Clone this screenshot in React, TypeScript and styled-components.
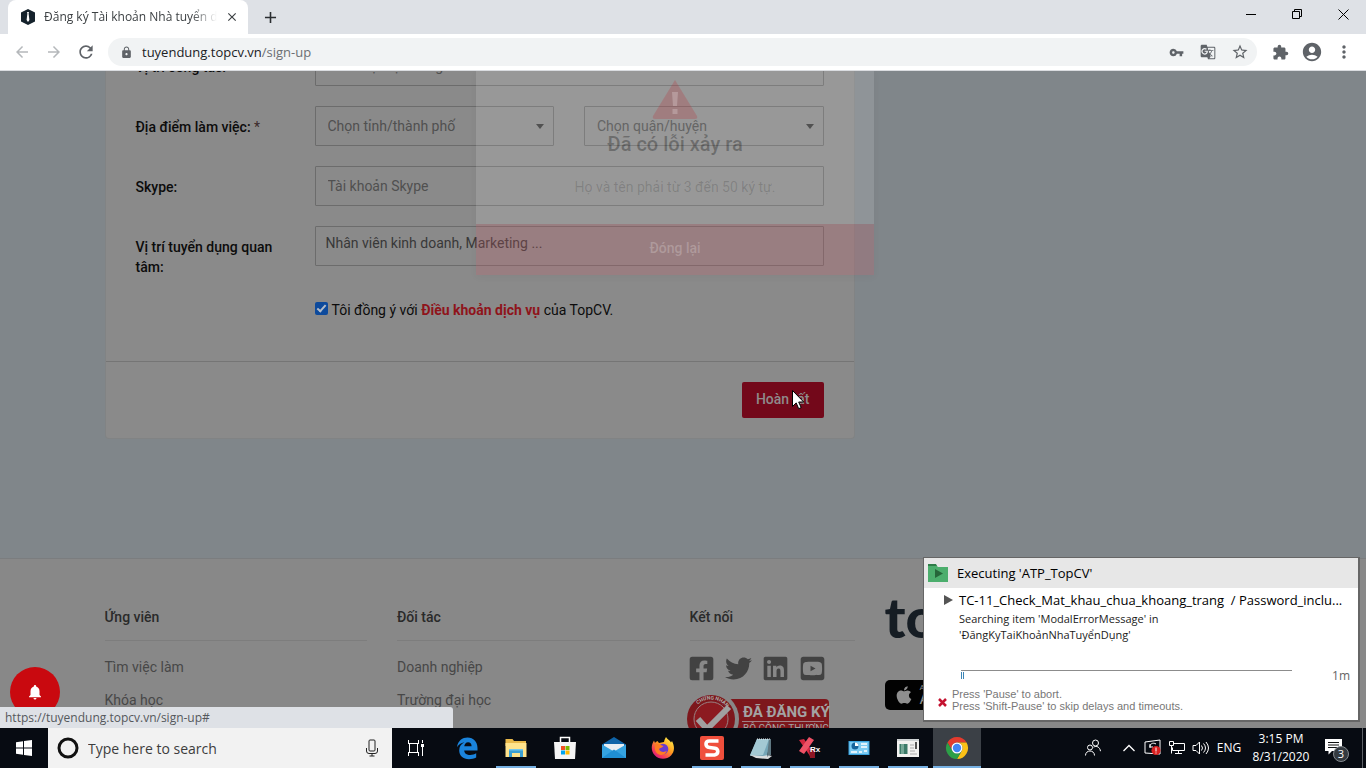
import React from 'react';
import styled, { createGlobalStyle, css } from 'styled-components';
import {
  MdArrowBack, MdArrowForward, MdRefresh, MdLock, MdVpnKey, MdGTranslate, MdStarBorder,
  MdExtension, MdAccountCircle, MdMoreVert, MdClose, MdAdd, MdNotifications,
} from 'react-icons/md';
import { FaFacebookSquare, FaTwitter, FaLinkedin, FaYoutubeSquare, FaApple } from 'react-icons/fa';

const ui = `'Open Sans', 'Noto Sans', sans-serif`;
const web = `Roboto, 'Noto Sans', sans-serif`;

const Global = createGlobalStyle`
  *, *::before, *::after { box-sizing: border-box; }
  body { margin: 0; font-family: ${web}; font-size: 14px; line-height: 20px; overflow: hidden; }
  button, input, select { font: inherit; margin: 0; }
  button { border: 0; background: none; padding: 0; }
  a { color: inherit; text-decoration: none; }
  h2, h3, p, ul { margin: 0; padding: 0; font-size: inherit; }
  ul { list-style: none; }
  svg { display: block; }
`;

const Desktop = styled.div`
  display: flex;
  flex-direction: column;
  height: 100vh;
`;

/* Browser frame */
const TabStrip = styled.header`
  display: flex;
  align-items: stretch;
  height: 34px;
  flex: none;
  padding-left: 8px;
  background: #dee1e6;
  font-family: ${ui};
`;
const Tab = styled.div`
  display: flex;
  align-items: center;
  gap: 8px;
  width: 240px;
  padding: 0 9px 0 12px;
  border-radius: 8px 8px 0 0;
  background: #fff;
  color: #3c4043;
`;
const TabTitle = styled.span`
  flex: 1;
  overflow: hidden;
  white-space: nowrap;
  font-size: 12px;
  mask-image: linear-gradient(90deg, #000 85%, transparent);
`;
const IconButton = styled.button<{ $w?: number; $tone?: string }>`
  display: flex;
  align-items: center;
  justify-content: center;
  flex: none;
  width: ${p => p.$w ?? 32}px;
  color: ${p => p.$tone ?? '#5f6368'};
`;
const WindowControls = styled.div`
  display: flex;
  margin-left: auto;
  padding-bottom: 6px;
`;
const Toolbar = styled.nav`
  display: flex;
  align-items: center;
  flex: none;
  height: 37px;
  padding: 0 6px;
  border-bottom: 1px solid #dadce0;
  background: #fff;
`;
const AddressBar = styled.label`
  display: flex;
  align-items: center;
  flex: 1;
  height: 28px;
  margin: 0 7px 0 6px;
  padding: 0 1px 0 12px;
  border-radius: 14px;
  background: #f1f3f4;
  font: 13px/20px ${ui};
  color: #6b6f73;
`;
const Url = styled.span`
  flex: 1;
  margin-left: 9px;
  b { font-weight: 400; color: #202124; }
`;

/* Web page */
const Viewport = styled.main`
  position: relative;
  flex: 1;
  min-height: 0;
  overflow: hidden;
  background: #80868a;
`;
const Scrolled = styled.div`
  margin-top: -25px;
`;
const Container = styled.div`
  display: flex;
  max-width: 1170px;
  margin: 0 auto;
`;
const Gutter = styled.div`
  padding-right: 17px;
`;
const Column = styled.div<{ $span: number }>`
  flex: 0 0 calc(100% * ${p => p.$span} / 12);
  min-width: 0;
  padding: 0 15px;
`;
const Card = styled.form`
  border: 1px solid #818384;
  border-top: 0;
  border-radius: 0 0 4px 4px;
  background: #8a8a8a;
`;
const Fields = styled.div`
  display: grid;
  row-gap: 20px;
  padding: 0 30px 38px;
`;
const FieldRow = styled.div`
  display: grid;
  grid-template-columns: 179px 1fr;
  align-items: start;
`;
const Label = styled.label`
  padding: 11px 30px 0 0;
  font-weight: 500;
  color: #0c0c0c;
  span { font-weight: 400; color: #3c2a2b; }
`;
const box = css`
  width: 100%;
  height: 40px;
  border: 1px solid #6c6c6c;
  border-radius: 1px;
  background: transparent;
  color: #505050;
`;
const TextInput = styled.input<{ $tags?: boolean }>`
  ${box}
  padding: ${p => (p.$tags ? '0 10px 6px' : '0 12px')};
  &::placeholder { color: ${p => (p.$tags ? '#383838' : '#505050')}; opacity: 1; }
`;
const SelectPair = styled.div`
  display: grid;
  grid-template-columns: 1fr 1fr;
  gap: 30px;
`;
const SelectBox = styled.div`
  position: relative;
  &::after {
    content: '';
    position: absolute;
    right: 10px;
    top: 18px;
    border: 4px solid transparent;
    border-top: 5px solid #3a3a3a;
    border-bottom: 0;
  }
`;
const Select = styled.select`
  ${box}
  padding: 0 12px;
  appearance: none;
`;
const Consent = styled.label`
  display: flex;
  align-items: center;
  gap: 4px;
  padding: 3px 0;
  grid-column: 2;
  color: #0c0c0c;
  a { font-weight: 700; color: #8f141b; }
`;
const Check = styled.input`
  appearance: none;
  width: 13px;
  height: 13px;
  border-radius: 2px;
  margin-bottom: 3px;
  background: #0d4a9c;
  position: relative;
  &:checked::after {
    content: '';
    position: absolute;
    left: 4px;
    top: 1px;
    width: 5px;
    height: 9px;
    border: solid #b4bdc9;
    border-width: 0 2px 2px 0;
    transform: rotate(42deg);
  }
`;
const CardFooter = styled.div`
  display: flex;
  justify-content: flex-end;
  padding: 20px 30px;
  border-top: 1px solid #757575;
`;
const Submit = styled.button`
  height: 36px;
  padding: 0 14px 2px;
  border-radius: 2px;
  background: #73081a;
  color: #8f8a8b;
  font-weight: 500;
`;
const SiteFooter = styled.footer`
  margin-top: 119px;
  padding-top: 48px;
  border-top: 1px solid #7b7d7f;
  background: #888;
  height: 260px;
`;
const FooterHead = styled.h3`
  padding-bottom: 13px;
  margin-bottom: 16px;
  border-bottom: 1px solid #7d7d7d;
  font-weight: 500;
  color: #2a2a2a;
`;
const Links = styled.ul`
  display: grid;
  gap: 13px;
  color: #474747;
`;
const Social = styled.div`
  display: flex;
  gap: 8px;
  margin: -2px 0 12px -2px;
  color: #424242;
  a { width: 29px; }
`;
const SealWrap = styled.div`
  margin: 0 -4px;
`;
const Wordmark = styled.div`
  height: 83px;
  margin-top: -10px;
  font: 900 56px/40px Lato, sans-serif;
  color: #161d24;
`;
const StoreBadge = styled.a`
  display: flex;
  align-items: center;
  gap: 6px;
  width: 110px;
  height: 30px;
  padding-left: 9px;
  border-radius: 5px;
  background: #020202;
  color: #8f8f8f;
  font-size: 16px;
  line-height: 14px;
  small { display: block; font-size: 8px; line-height: 8px; }
`;
const BellButton = styled.button`
  position: absolute;
  left: 10px;
  bottom: 11px;
  display: grid;
  place-items: center;
  width: 50px;
  height: 50px;
  border-radius: 50%;
  background: #c9090f;
  color: #fff;
`;
const StatusBubble = styled.div`
  position: absolute;
  left: 0;
  bottom: 0;
  width: 453px;
  height: 21px;
  padding-left: 5px;
  border-radius: 0 3px 0 0;
  background: #dee1e6;
  color: #55585c;
  font: 12px/21px ${ui};
`;

/* Fading error dialog */
const ModalLayer = styled.div`
  position: absolute;
  inset: 0 16px auto 0;
  display: flex;
  justify-content: center;
`;
const Modal = styled.section`
  width: 398px;
  height: 204px;
  padding-top: 8px;
  text-align: center;
  background: rgba(255, 255, 255, 0.12);
  box-shadow: 0 2px 8px rgba(0, 0, 0, 0.04);
  svg { margin: 0 auto; }
  h2 { margin-top: 10px; font-size: 20px; line-height: 28px; font-weight: 500; color: rgba(0, 0, 0, 0.29); }
  p { margin-top: 19px; line-height: 20px; color: rgba(0, 0, 0, 0.16); }
`;
const ModalClose = styled.button`
  width: 100%;
  height: 51px;
  margin-top: 27px;
  padding-bottom: 3px;
  background: rgba(160, 0, 20, 0.17);
  color: rgba(255, 255, 255, 0.22);
  font-weight: 500;
`;
const Cursor = styled.svg`
  position: absolute;
  left: 792px;
  top: 319px;
`;

/* Test runner notice */
const Notice = styled.aside`
  position: fixed;
  right: 6px;
  bottom: 46px;
  width: 437px;
  height: 165px;
  border: 2px solid #666;
  border-top-width: 1px;
  border-left-width: 1px;
  background: #fff;
  color: #1b1b1b;
  font: 12px/16px ${ui};
`;
const NoticeHead = styled.div`
  display: flex;
  align-items: center;
  gap: 9px;
  height: 30px;
  padding-left: 4px;
  background: #e7e7e7;
  color: #000;
  font-size: 13px;
`;
const NoticeBody = styled.div`
  padding: 3px 8px 0 20px;
`;
const TestName = styled.div`
  display: flex;
  align-items: center;
  gap: 5px;
  line-height: 18px;
  font-size: 13px;
  color: #000;
  white-space: nowrap;
`;
const StepText = styled.p`
  padding: 2px 0 0 15px;
  font-size: 11px;
`;
const Progress = styled.div`
  display: flex;
  gap: 40px;
  padding: 27px 0 0 17px;
  color: #666;
  line-height: 12px;
`;
const Track = styled.div`
  flex: 1;
  border-top: 1px solid #8c8c8c;
  &::before {
    content: '';
    display: block;
    width: 3px;
    height: 7px;
    margin-top: 1px;
    border: solid #3b84b5;
    border-width: 0 1px;
  }
`;
const Hints = styled.div`
  display: flex;
  align-items: center;
  gap: 5px;
  margin-left: -6px;
  padding-top: 6px;
  color: #777;
  font: 11px/12px 'Liberation Sans', sans-serif;
  svg { margin-top: 4px; }
`;

/* Taskbar */
const Taskbar = styled.footer`
  display: flex;
  flex: none;
  height: 40px;
  background: #070b12;
  font-family: ${ui};
  color: #fff;
`;
const Search = styled.label`
  display: flex;
  align-items: center;
  gap: 9px;
  width: 344px;
  padding: 0 14px 0 9px;
  background: #f2f2f2;
  input {
    flex: 1;
    min-width: 0;
    border: 0;
    padding: 1px 0 0;
    background: none;
    font-size: 14px;
  }
  input::placeholder { color: #3d3d3d; opacity: 1; }
`;
const Apps = styled.div`
  display: flex;
  gap: 1px;
  margin-left: 3px;
`;
const AppButton = styled.button<{ $open?: boolean; $active?: boolean }>`
  display: grid;
  place-items: center;
  position: relative;
  width: 48px;
  background: ${p => (p.$active ? '#3b4046' : 'transparent')};
  &::after {
    content: '';
    display: ${p => (p.$open ? 'block' : 'none')};
    position: absolute;
    bottom: 0;
    left: ${p => (p.$active ? 0 : 4)}px;
    right: ${p => (p.$active ? 0 : 4)}px;
    height: 2px;
    background: #76b0e2;
  }
`;
const Tray = styled.div`
  display: flex;
  align-items: center;
  margin-left: auto;
  font-size: 12px;
  line-height: 18px;
`;
const Clock = styled.time`
  width: 72px;
  text-align: center;
`;
const Notifications = styled.button`
  width: 45px;
  padding: 4px 0 0 8px;
  color: #fff;
`;
const PeekEdge = styled.div`
  width: 4px;
  height: 40px;
  border-left: 1px solid #5c6066;
`;

const Svg = ({ s = 24, vb = '0 0 24 24', children }: { s?: number; vb?: string; children: React.ReactNode }) => (
  <svg width={s} height={s} viewBox={vb} fill="none">{children}</svg>
);

const Edge = () => (
  <Svg><path d="M2 11.200C3 4.500 7.500 1.500 12.500 1.500 18.500 1.500 22.500 6 22.500 12v2.400H9.200c.2 3 2.600 4.500 6 4.500 2.200 0 4.300-.6 6-1.600v4.200c-2 1.200-4.600 1.700-7.200 1.700C8 23.200 4.200 19.600 4.200 14.500c0-3.700 1.900-6.600 5.200-8.200C6 6.800 3.400 8.700 2 11.200zM9.300 10.300h7.300c0-2.700-1.400-4-3.500-4-2.200 0-3.600 1.700-3.800 4z" fill="#1a84dc" /></Svg>
);
const Folder = () => (
  <Svg>
    <path d="M1.500 3h7l1.500 2h12v5H1.500z" fill="#e9b94a" />
    <path d="M1.500 7h21v14h-21z" fill="#ffe38c" />
    <path d="M5 13h14v8h-3v-4H8v4H5z" fill="#3ba0d3" />
    <path d="M5 13h14v1.500H5z" fill="#75c7ea" />
  </Svg>
);
const Store = () => (
  <Svg>
    <path d="M7.500 7V1.500h9V7" stroke="#fff" strokeWidth="1.500" />
    <path d="M1 6h22l-1 17H2z" fill="#f5f5f5" />
    <path d="M8 10h4v4H8z" fill="#f25022" /><path d="M12.500 10h4v4h-4z" fill="#7fba00" />
    <path d="M8 14.500h4v4H8z" fill="#00a4ef" /><path d="M12.500 14.500h4v4h-4z" fill="#ffb900" />
  </Svg>
);
const Mail = () => (
  <Svg>
    <path d="M0 8.500 12 1l12 7.500V22H0z" fill="#0f64a8" />
    <path d="M2 8h20v7H2z" fill="#e8eef2" />
    <path d="m0 8.500 12 7 12-7V22H0z" fill="#35a3e0" />
    <path d="m0 22 12-8.500L24 22z" fill="#1f8fd3" />
  </Svg>
);
const Firefox = () => (
  <Svg>
    <defs>
      <linearGradient id="ff" x1="20" y1="2" x2="5" y2="22" gradientUnits="userSpaceOnUse">
        <stop stopColor="#fff04a" /><stop offset=".45" stopColor="#ff9a1f" /><stop offset=".8" stopColor="#f5385c" /><stop offset="1" stopColor="#d51a80" />
      </linearGradient>
    </defs>
    <path d="M15 1c1 2.500 4 3 5 5.500l1-1.500c3 6 2.500 11-1 14.500-4.500 4.500-12 4.200-16 0C-.5 14.500.2 9 3 4.500L4 7c.8-1 1.500-1.500 2.500-2L8 7l5-1c.5-2 1-3.500 2-5z" fill="url(#ff)" />
    <circle cx="12" cy="13" r="5.300" fill="#6a3bd0" />
    <path d="M4.500 8.500c3-1.500 5 .5 8 1.500-1 2-3.500 1.500-4.500 3 1 3 5 4 8 1.500-1 4-5.500 5.500-9 3.500-3-1.800-3.800-6-2.500-9.500z" fill="#ff7d22" />
  </Svg>
);
const Snagit = () => (
  <Svg>
    <rect width="24" height="24" rx="2" fill="#ef4f3c" />
    <path d="M18.500 5H9.500Q6 5 6 8t3.500 3.500l5.500.8q2.800.5 2.800 3.300T14.500 19H5.500" stroke="#fff" strokeWidth="3.600" />
  </Svg>
);
const Notebook = () => (
  <Svg>
    <path d="M8 3h14l-4 17H1z" fill="#75a6b8" /><path d="M8 3h12l-6 16H1z" fill="#a3c9d4" />
    <path d="m1 19 13 1 5-1 4 1-4 3-12-1z" fill="#d9dcde" /><path d="M20 3h2v16h-2l-2 2z" fill="#5f7882" />
    <path d="M8 3h13" stroke="#eee" strokeDasharray="1 1" />
  </Svg>
);
const Ranorex = () => (
  <Svg>
    <path d="m1 4 5-1 11 16-5 1z" fill="#d32840" /><path d="m11 1 5 3L6 18l-5-3z" fill="#ee5266" />
    <path d="M11 14h6v8h-5z" fill="#8f1724" />
    <text x="12" y="16" fontFamily="Liberation Sans" fontSize="8" fontWeight="700" fill="#fff">Rx</text>
  </Svg>
);
const Panel = () => (
  <Svg>
    <path d="M1.500 5h21v14h-21z" fill="#39a3df" /><path d="M2.500 6h19v12h-19z" fill="#7dcbf2" />
    <circle cx="8" cy="10" r="3.500" fill="#16639b" /><path d="M8 10V6.500A3.500 3.500 0 0 1 11.500 10z" fill="#fff" />
    <path d="M14 8h6M14 11h6M4 16h6M12 16h3M17 15h3" stroke="#fff" strokeWidth="1.500" />
  </Svg>
);
const Report = () => (
  <Svg>
    <path d="M1 3h22v18H1z" fill="#f2f2f0" /><path d="M1 3h22v2H1z" fill="#cfd3d4" />
    <path d="M3.500 8h8v10h-8z" fill="#3c7a68" /><path d="M5 8h3v10H5z" fill="#75a796" />
    <path d="M14 9h4M14 12h4M14 15h5M14 18h7" stroke="#aaa" /><path d="M20 6v7" stroke="#222" strokeWidth="1.500" />
  </Svg>
);
const Chrome = () => (
  <Svg>
    <path d="M2.470 6.500A11 11 0 0 1 21.530 6.500H12A5.500 5.500 0 0 0 7.240 14.750z" fill="#e33b2e" />
    <path d="M21.530 6.500A11 11 0 0 1 12 23l4.760-8.250A5.500 5.500 0 0 0 12 6.500z" fill="#fbc116" />
    <path d="M12 23A11 11 0 0 1 2.470 6.500l4.770 8.250a5.500 5.500 0 0 0 9.520 0z" fill="#2c9f47" />
    <circle cx="12" cy="12" r="5.500" fill="#fff" /><circle cx="12" cy="12" r="4.200" fill="#4285f4" />
  </Svg>
);

const apps = [
  { name: 'Edge', icon: <Edge /> },
  { name: 'File Explorer', icon: <Folder />, open: true },
  { name: 'Store', icon: <Store /> },
  { name: 'Mail', icon: <Mail /> },
  { name: 'Firefox', icon: <Firefox /> },
  { name: 'Snagit', icon: <Snagit />, open: true },
  { name: 'Notepad', icon: <Notebook />, open: true },
  { name: 'Ranorex', icon: <Ranorex />, open: true },
  { name: 'Control Panel', icon: <Panel />, open: true },
  { name: 'Report', icon: <Report />, open: true },
  { name: 'Chrome', icon: <Chrome />, open: true, active: true },
];

const TradeBadge = () => (
  <SealWrap>
    <svg width="146" height="52" viewBox="0 0 146 52">
      <rect x="30" y="5" width="113" height="42" rx="4" fill="#7d171c" />
      <circle cx="25" cy="25" r="28" fill="#888" />
      <circle cx="25" cy="25" r="24" fill="#7d171c" />
      <circle cx="25" cy="25" r="17" fill="#8c1a20" stroke="#9a8283" />
      <path id="ring" d="M5.500 25a19.500 19.500 0 0 1 39 0" fill="none" />
      <text fontSize="5" fontWeight="700" fill="#aaa" fontFamily="Roboto"><textPath href="#ring" startOffset="16">CHỨNG NHẬN</textPath></text>
      <path d="m12 25 9 10 22-22" stroke="#a0a0a0" strokeWidth="6" fill="none" />
      <text x="57" y="23" fontSize="15" fontWeight="700" fill="#a3a3a3" fontFamily="Roboto">ĐÃ ĐĂNG KÝ</text>
      <path d="M56 27.500h82" stroke="#a08084" />
      <text x="57" y="38" fontSize="10" fill="#a3a3a3" fontFamily="Roboto">BỘ CÔNG THƯƠNG</text>
    </svg>
  </SealWrap>
);

export default function App() {
  return (
    <Desktop>
      <Global />
      <TabStrip>
        <Tab>
          <Svg s={16} vb="0 0 16 16">
            <path d="M8 0l7 3.500v9L8 16l-7-3.500v-9z" fill="#15222c" />
            <path d="M7 3h2l-.4 1.500L9.400 11 8 13l-1.400-2 .8-6.500z" fill="#fff" />
          </Svg>
          <TabTitle>Đăng ký Tài khoản Nhà tuyển dụng</TabTitle>
          <IconButton $w={14} $tone="#3c4043" aria-label="Close tab"><MdClose size={14} /></IconButton>
        </Tab>
        <IconButton $w={44} $tone="#2b2e31" aria-label="New tab"><MdAdd size={19} /></IconButton>
        <WindowControls>
          <IconButton $w={46} aria-label="Minimize"><Svg s={10} vb="0 0 10 10"><path d="M0 5.500h10" stroke="#000" /></Svg></IconButton>
          <IconButton $w={46} aria-label="Restore"><Svg s={10} vb="0 0 10 10"><path d="M.5 2.500h7v7h-7zM2.500 2.500v-2h7v7h-2" stroke="#000" /></Svg></IconButton>
          <IconButton $w={46} aria-label="Close"><Svg s={11} vb="0 0 11 11"><path d="m.5.500 10 10m0-10-10 10" stroke="#000" /></Svg></IconButton>
        </WindowControls>
      </TabStrip>
      <Toolbar>
        <IconButton $tone="#b5b8bb" aria-label="Back"><MdArrowBack size={18} /></IconButton>
        <IconButton $tone="#b5b8bb" aria-label="Forward"><MdArrowForward size={18} /></IconButton>
        <IconButton aria-label="Reload"><MdRefresh size={20} /></IconButton>
        <AddressBar>
          <MdLock size={13} color="#5f6368" />
          <Url><b>tuyendung.topcv.vn</b>/sign-up</Url>
          <IconButton aria-label="Password"><MdVpnKey size={15} /></IconButton>
          <IconButton aria-label="Translate"><MdGTranslate size={16} /></IconButton>
          <IconButton aria-label="Bookmark"><MdStarBorder size={18} /></IconButton>
        </AddressBar>
        <IconButton aria-label="Extensions"><MdExtension size={17} /></IconButton>
        <IconButton aria-label="Profile"><MdAccountCircle size={22} /></IconButton>
        <IconButton aria-label="Menu"><MdMoreVert size={20} /></IconButton>
      </Toolbar>

      <Viewport>
        <Scrolled>
          <Gutter>
            <Container>
              <Column $span={8}>
                <Card onSubmit={e => e.preventDefault()}>
                  <Fields>
                    <FieldRow>
                      <Label htmlFor="position">Vị trí công tác:</Label>
                      <TextInput id="position" placeholder="Chức vụ hiện đang" />
                    </FieldRow>
                    <FieldRow>
                      <Label htmlFor="city">Địa điểm làm việc: <span>*</span></Label>
                      <SelectPair>
                        <SelectBox><Select id="city"><option>Chọn tỉnh/thành phố</option></Select></SelectBox>
                        <SelectBox><Select aria-label="Quận/huyện"><option>Chọn quận/huyện</option></Select></SelectBox>
                      </SelectPair>
                    </FieldRow>
                    <FieldRow>
                      <Label htmlFor="skype">Skype:</Label>
                      <TextInput id="skype" placeholder="Tài khoản Skype" />
                    </FieldRow>
                    <FieldRow>
                      <Label htmlFor="jobs">Vị trí tuyển dụng quan tâm:</Label>
                      <TextInput id="jobs" $tags placeholder="Nhân viên kinh doanh, Marketing ..." />
                    </FieldRow>
                    <FieldRow>
                      <Consent>
                        <Check type="checkbox" defaultChecked />
                        <span>Tôi đồng ý với <a href="#terms">Điều khoản dịch vụ</a> của TopCV.</span>
                      </Consent>
                    </FieldRow>
                  </Fields>
                  <CardFooter><Submit>Hoàn tất</Submit></CardFooter>
                </Card>
              </Column>
            </Container>
          </Gutter>
          <SiteFooter>
            <Gutter>
              <Container>
                <Column $span={3}>
                  <FooterHead>Ứng viên</FooterHead>
                  <Links>
                    <li><a href="#jobs">Tìm việc làm</a></li>
                    <li><a href="#courses">Khóa học</a></li>
                  </Links>
                </Column>
                <Column $span={3}>
                  <FooterHead>Đối tác</FooterHead>
                  <Links>
                    <li><a href="#companies">Doanh nghiệp</a></li>
                    <li><a href="#universities">Trường đại học</a></li>
                  </Links>
                </Column>
                <Column $span={2}>
                  <FooterHead>Kết nối</FooterHead>
                  <Social>
                    <a href="#facebook" aria-label="Facebook"><FaFacebookSquare size={27} /></a>
                    <a href="#twitter" aria-label="Twitter"><FaTwitter size={27} /></a>
                    <a href="#linkedin" aria-label="LinkedIn"><FaLinkedin size={27} /></a>
                    <a href="#youtube" aria-label="YouTube"><FaYoutubeSquare size={27} /></a>
                  </Social>
                  <TradeBadge />
                </Column>
                <Column $span={4}>
                  <Wordmark>to</Wordmark>
                  <StoreBadge href="#app-store"><FaApple size={20} /><span><small>A</small>A</span></StoreBadge>
                </Column>
              </Container>
            </Gutter>
          </SiteFooter>
        </Scrolled>

        <ModalLayer>
          <Modal>
            <svg width="46" height="41" viewBox="0 0 46 41">
              <path d="M23 1 45 37q1 3-2 3H3q-3 0-2-3z" fill="rgba(190,30,40,.22)" />
              <path d="M20 13h6l-1 14h-4zM20.500 30h5v5h-5z" fill="rgba(255,255,255,.22)" />
            </svg>
            <h2>Đã có lỗi xảy ra</h2>
            <p>Họ và tên phải từ 3 đến 50 ký tự.</p>
            <ModalClose>Đóng lại</ModalClose>
          </Modal>
        </ModalLayer>
        <BellButton aria-label="Thông báo"><MdNotifications size={18} /></BellButton>
        <StatusBubble>https://tuyendung.topcv.vn/sign-up#</StatusBubble>
        <Cursor width="13" height="20" viewBox="0 0 13 20">
          <path d="M.5.500v16l3.700-3.600 2.500 5.800 2.500-1.100-2.500-5.600h5z" fill="#fff" stroke="#000" />
        </Cursor>
      </Viewport>

      <Notice>
        <NoticeHead>
          <svg width="20" height="18" viewBox="0 0 20 18">
            <path d="M0 1h8l2 2h10v15H0z" fill="#4cae6d" /><path d="M0 0h8l1 2H0z" fill="#2f7d49" /><path d="m7 5 8 4.500L7 14z" fill="#26663a" />
          </svg>
          Executing 'ATP_TopCV'
        </NoticeHead>
        <NoticeBody>
          <TestName>
            <svg width="10" height="12" viewBox="0 0 10 12"><path d="m0 1 9 5-9 5z" fill="#555" /></svg>
            <span>TC-11_Check_Mat_khau_chua_khoang_trang&nbsp; / Password_inclu...</span>
          </TestName>
          <StepText>Searching item 'ModalErrorMessage' in<br />'ĐăngKyTaiKhoảnNhaTuyểnDụng'</StepText>
          <Progress><Track />1m</Progress>
          <Hints>
            <svg width="9" height="9" viewBox="0 0 9 9"><path d="m1 1 7 7m0-7L1 8" stroke="#c41230" strokeWidth="2.500" /></svg>
            <p>Press 'Pause' to abort.<br />Press 'Shift-Pause' to skip delays and timeouts.</p>
          </Hints>
        </NoticeBody>
      </Notice>

      <Taskbar>
        <AppButton aria-label="Start">
          <Svg s={16} vb="0 0 16 16"><path d="M0 2.200 7 1.200V7.500H0zM8 1l8-1v7.500H8zM0 8.500h7v6.300l-7-1zM8 8.500h8V16l-8-1.100z" fill="#fff" /></Svg>
        </AppButton>
        <Search>
          <Svg s={22} vb="0 0 22 22"><circle cx="11" cy="11" r="9" stroke="#111" strokeWidth="3" /></Svg>
          <input placeholder="Type here to search" aria-label="Search" />
          <svg width="12" height="18" viewBox="0 0 12 18" fill="none" stroke="#222">
            <rect x="3" y="1" width="6" height="11" rx="1" /><path d="M.5 9v3q0 2.500 2.500 2.500h6q2.500 0 2.500-2.500V9M6 14.500V17M3.500 17h5" />
          </svg>
        </Search>
        <AppButton aria-label="Task view">
          <Svg s={18} vb="0 0 18 18">
            <path d="M1 4.500h11M1 13.500h11M2.500 4.500v9M10.500 4.500v9M1.500 1v3M11.500 1v3M1.500 14v3M11.500 14v3M15.500 1v3M15.500 8v9" stroke="#fff" /><path d="M14 5h3v3h-3z" fill="#fff" />
          </Svg>
        </AppButton>
        <Apps>
          {apps.map(a => <AppButton key={a.name} aria-label={a.name} $open={a.open} $active={a.active}>{a.icon}</AppButton>)}
        </Apps>
        <Tray>
          <IconButton $w={48} aria-label="People">
            <Svg s={18} vb="0 0 18 18"><circle cx="6" cy="8.500" r="2.500" stroke="#fff" /><path d="M1.500 16.500c0-6 9-6 9 0" stroke="#fff" /><circle cx="11.500" cy="4" r="3" stroke="#fff" /><path d="M9.500 8.200c3-2 6.500 0 7 4" stroke="#fff" /></Svg>
          </IconButton>
          <IconButton $w={24} aria-label="Hidden icons"><Svg s={12} vb="0 0 12 12"><path d="m.5 9 5.500-5.500L11.500 9" stroke="#fff" strokeWidth="1.300" /></Svg></IconButton>
          <IconButton $w={24} aria-label="Updates">
            <Svg s={18} vb="0 0 18 18"><path d="m1 3 15-2v14L1 14z" stroke="#fff" /><path d="M12 5c-3-2-7 0-6 4m0-4v3h3" stroke="#fff" /><circle cx="12" cy="11.500" r="4.500" fill="#d92020" /><path d="M12 8.500v4m0 1v1" stroke="#fff" /></Svg>
          </IconButton>
          <IconButton $w={24} aria-label="Network">
            <Svg s={16} vb="0 0 16 16"><path d="M5 3.500h10.500v7h-12v-3M9.500 10.500v3M6 13.500h7M.5 1.500h4v4h-4zM2.500 5.500v8" stroke="#fff" /></Svg>
          </IconButton>
          <IconButton $w={24} aria-label="Volume">
            <Svg s={18} vb="0 0 18 18"><path d="M1 6.500h3L7.500 3v12L4 11.500H1zM9.500 6.500q2 2.500 0 5M11.500 4.500q4 4.500 0 9M14 3q5 6 0 12" stroke="#fff" /></Svg>
          </IconButton>
          <IconButton $w={32} $tone="#fff">ENG</IconButton>
          <Clock>3:15 PM<br />8/31/2020</Clock>
          <Notifications aria-label="3 notifications">
            <svg width="26" height="26" viewBox="0 0 26 26">
              <path d="M0 2h17v12H7l-3.500 3.500V14H0z" fill="#fff" /><path d="M3 5.500h11M3 8h11M3 10.500h11" stroke="#111" />
              <circle cx="16" cy="17" r="7.500" fill="#343a40" stroke="#868b90" />
              <text x="16" y="21" textAnchor="middle" fontSize="11" fill="#fff" fontFamily="Open Sans">3</text>
            </svg>
          </Notifications>
          <PeekEdge />
        </Tray>
      </Taskbar>
    </Desktop>
  );
}
